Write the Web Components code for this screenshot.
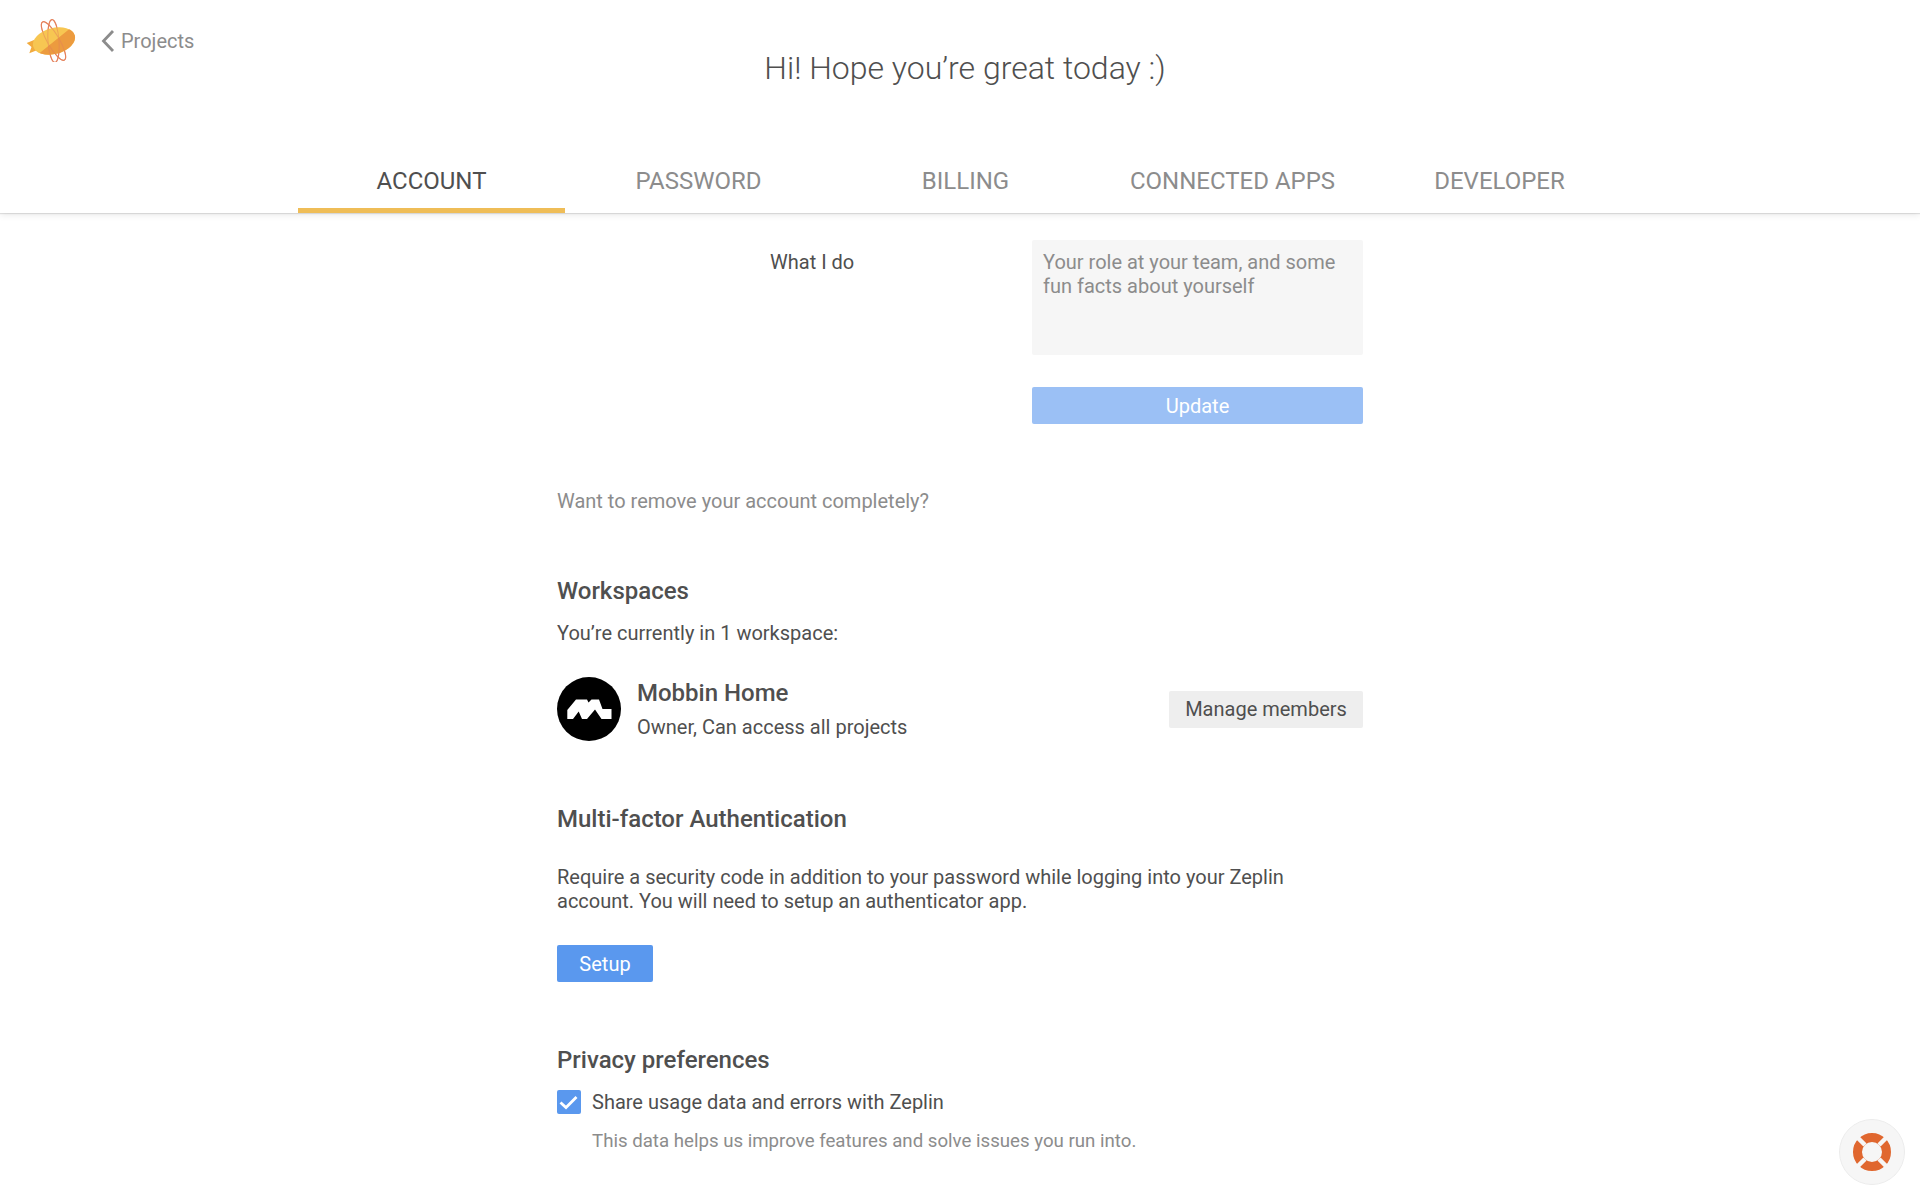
<!DOCTYPE html>
<html>
<head>
<meta charset="utf-8">
<title>Zeplin account</title>
<style>
  html, body { margin: 0; padding: 0; background: #fff; }
  body { height: 1200px; overflow: hidden; font-family: Roboto, "Liberation Sans", sans-serif; color: #4f4f4f; }
</style>
</head>
<body>
<app-header></app-header>
<account-page></account-page>
<help-button></help-button>

<script>
class AppHeader extends HTMLElement {
  constructor() {
    super();
    this.shadowDOM = this.attachShadow({mode: "open"});
  }
  connectedCallback() {
    this.shadowDOM.innerHTML = `
      <style>
        :host { display: block; height: 213px; box-sizing: border-box; background: #fff; box-shadow: 0 1px 1px rgba(0,0,0,.1), 0 2px 7px rgba(0,0,0,.09); position: relative; }
        .top { display: flex; height: 158px; }
        .brand { display: flex; align-items: flex-start; width: 0; white-space: nowrap; }
        .logo { margin: 16px 0 0 26px; width: 50px; height: 46px; flex: none; }
        .back { display: flex; align-items: center; margin: 29px 0 0 24px; gap: 6px; font-size: 20px; color: #8c8c8c; }
        .title { flex: 1; text-align: center; font-size: 32px; font-weight: 300; color: #4f4f4f; line-height: 38px; margin-top: 49px; padding-left: 10px; }
        nav { display: flex; justify-content: center; padding-left: 11px; height: 55px; }
      </style>
      <div class="top">
        <div class="brand">
          <svg class="logo" viewBox="0 0 50 46">
            <defs>
              <clipPath id="lower"><path d="M0 37 L10.7 33 L50 15.5 V46 H0 Z"/></clipPath>
            </defs>
            <path d="M0.7 27 L8 24 L11.5 34 L3.3 37.3 L5.5 31 Z" fill="#f2ab3e"/>
            <g fill="none" stroke="#e5805a" stroke-width="1.2">
              <ellipse cx="27.5" cy="25" rx="6" ry="22" transform="rotate(-30 27.5 25)"/>
              <ellipse cx="27.5" cy="25" rx="5.5" ry="21.5" transform="rotate(-4 27.5 25)"/>
            </g>
            <ellipse cx="28" cy="25" rx="21.5" ry="13" transform="rotate(-15 28 25)" fill="#f7c652"/>
            <ellipse cx="28" cy="25" rx="21.5" ry="13" transform="rotate(-15 28 25)" fill="#ec9b3f" clip-path="url(#lower)"/>
            <g fill="none" stroke="#e5805a" stroke-width="1" opacity=".5">
              <ellipse cx="27.5" cy="25" rx="6" ry="22" transform="rotate(-30 27.5 25)"/>
              <ellipse cx="27.5" cy="25" rx="5.5" ry="21.5" transform="rotate(-4 27.5 25)"/>
            </g>
          </svg>
          <a class="back">
            <svg width="15" height="24" viewBox="0 0 15 24"><path d="M13 2 L3.5 12 L13 22" fill="none" stroke="#8c8c8c" stroke-width="2.8"/></svg>
            Projects
          </a>
        </div>
        <div class="title">Hi! Hope you’re great today :)</div>
      </div>
      <nav>
        <tab-item active>ACCOUNT</tab-item>
        <tab-item>PASSWORD</tab-item>
        <tab-item>BILLING</tab-item>
        <tab-item>CONNECTED APPS</tab-item>
        <tab-item>DEVELOPER</tab-item>
      </nav>`;
  }
}

class TabItem extends HTMLElement {
  constructor() {
    super();
    this.attachShadow({mode: "open"}).innerHTML = `
      <style>
        :host { display: block; width: 267px; height: 55px; box-sizing: border-box; text-align: center; font-size: 24px; line-height: 28px; padding-top: 9px; color: #8c8c8c; }
        :host([active]) { color: #4f4f4f; border-bottom: 5px solid #efbd57; }
      </style>
      <slot></slot>`;
  }
}

class BaseButton extends HTMLElement {
  constructor() {
    super();
    this.attachShadow({mode: "open"}).innerHTML = `
      <style>
        :host { display: flex; align-items: center; justify-content: center; height: 37px; box-sizing: border-box; border-radius: 2px; font-size: 20px; background: #5a98ee; color: #fff; }
        :host([kind="faded"]) { background: #9bc0f5; }
        :host([kind="grey"]) { background: #eeeeee; color: #4f4f4f; }
      </style>
      <slot></slot>`;
  }
}

class WorkspaceRow extends HTMLElement {
  constructor() {
    super();
    this.attachShadow({mode: "open"}).innerHTML = `
      <style>
        :host { display: flex; align-items: center; height: 64px; }
        svg { width: 64px; height: 64px; flex: none; }
        .info { flex: 1; margin-left: 16px; }
        .name { font-size: 24px; font-weight: 500; line-height: 28px; margin-top: 0; }
        .role { font-size: 20px; line-height: 24px; margin-top: 8px; }
        base-button { width: 194px; }
      </style>
      <svg viewBox="0 0 64 64">
        <circle cx="32" cy="32" r="32" fill="#000"/>
        <path d="M10.3 42 V33 L19 22.5 H30 L31.5 25.5 L34.5 22.5 H42 L45.5 32 H54.5 V42 H44.5 L38 32.5 L30 42 H25 L21.7 34.5 L16 42 Z" fill="#fff"/>
      </svg>
      <div class="info">
        <div class="name">Mobbin Home</div>
        <div class="role">Owner, Can access all projects</div>
      </div>
      <base-button kind="grey">Manage members</base-button>`;
  }
}

class AccountPage extends HTMLElement {
  constructor() {
    super();
    this.attachShadow({mode: "open"}).innerHTML = `
      <style>
        :host { display: block; width: 806px; margin: 0 auto; font-size: 20px; line-height: 24px; color: #4f4f4f; }
        .form-row { display: flex; padding-top: 27px; }
        .label { margin-left: 213px; padding-top: 10px; }
        .right { width: 331px; margin-left: auto; }
        .textarea { box-sizing: border-box; height: 115px; background: #f6f6f6; border-radius: 2px; padding: 10px 11px; color: #8c8c8c; }
        .update { margin-top: 32px; }
        .remove { color: #8c8c8c; margin-top: 65px; }
        h2 { font-size: 24px; font-weight: 500; line-height: 28px; margin: 0; color: #4f4f4f; }
        .workspaces { margin-top: 64px; }
        .count { margin-top: 16px; }
        workspace-row { margin-top: 32px; }
        .mfa { margin-top: 64px; }
        p { margin: 32px 0 0; }
        .setup { width: 96px; margin-top: 32px; }
        .privacy { margin-top: 64px; }
        .check { display: flex; align-items: center; margin-top: 16px; }
        .box { width: 24px; height: 24px; border-radius: 2px; background: #5a98ee; margin-right: 11px; flex: none; }
        .hint { color: #8c8c8c; margin: 15px 0 0 35px; font-size: 18.67px; }
      </style>
      <div class="form-row">
        <div class="label">What I do</div>
        <div class="right">
          <div class="textarea">Your role at your team, and some fun facts about yourself</div>
          <base-button class="update" kind="faded">Update</base-button>
        </div>
      </div>
      <div class="remove">Want to remove your account completely?</div>
      <h2 class="workspaces">Workspaces</h2>
      <div class="count">You’re currently in 1 workspace:</div>
      <workspace-row></workspace-row>
      <h2 class="mfa">Multi-factor Authentication</h2>
      <p>Require a security code in addition to your password while logging into your Zeplin account. You will need to setup an authenticator app.</p>
      <base-button class="setup">Setup</base-button>
      <h2 class="privacy">Privacy preferences</h2>
      <div class="check">
        <svg class="box" viewBox="0 0 24 24"><path d="M3.5 12.5 L9 17.5 L19.5 7" fill="none" stroke="#fff" stroke-width="2.8"/></svg>
        Share usage data and errors with Zeplin
      </div>
      <div class="hint">This data helps us improve features and solve issues you run into.</div>`;
  }
}

class HelpButton extends HTMLElement {
  constructor() {
    super();
    this.attachShadow({mode: "open"}).innerHTML = `
      <style>
        :host { display: block; position: fixed; left: 1839px; top: 1119px; width: 66px; height: 66px; }
      </style>
      <svg width="66" height="66" viewBox="0 0 66 66">
        <circle cx="33" cy="33" r="32.5" fill="#f6f6f6" stroke="#ececec"/>
        <circle cx="33" cy="33" r="14.5" fill="none" stroke="#e0672f" stroke-width="9"/>
        <g stroke="#f6f6f6" stroke-width="4.5">
          <path d="M19 19 L26 26 M47 19 L40 26 M19 47 L26 40 M47 47 L40 40"/>
        </g>
      </svg>`;
  }
}

customElements.define("tab-item", TabItem);
customElements.define("base-button", BaseButton);
customElements.define("app-header", AppHeader);
customElements.define("workspace-row", WorkspaceRow);
customElements.define("account-page", AccountPage);
customElements.define("help-button", HelpButton);
</script>
</body>
</html>
